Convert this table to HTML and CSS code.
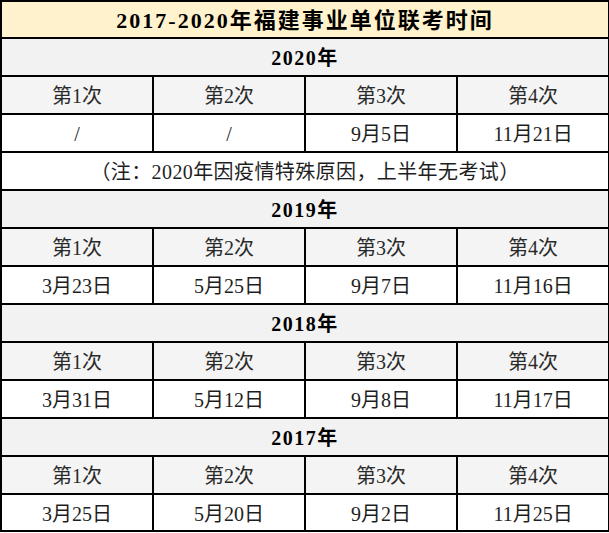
FILE: index.html
```html
<!DOCTYPE html>
<html lang="zh-CN">
<head>
<meta charset="utf-8">
<title>2017-2020年福建事业单位联考时间</title>
<link rel="stylesheet" href="styles.css">
</head>
<body>
<table class="exam">
  <colgroup><col class="c"><col class="c"><col class="c"><col class="c"></colgroup>
  <tbody>
    <tr class="title"><td colspan="4">2017-2020年福建事业单位联考时间</td></tr>

    <tr class="year"><td colspan="4">2020年</td></tr>
    <tr class="head"><td>第1次</td><td>第2次</td><td>第3次</td><td>第4次</td></tr>
    <tr class="data"><td>/</td><td>/</td><td>9月5日</td><td>11月21日</td></tr>
    <tr class="data note"><td colspan="4">（注：2020年因疫情特殊原因，上半年无考试）</td></tr>

    <tr class="year"><td colspan="4">2019年</td></tr>
    <tr class="head"><td>第1次</td><td>第2次</td><td>第3次</td><td>第4次</td></tr>
    <tr class="data"><td>3月23日</td><td>5月25日</td><td>9月7日</td><td>11月16日</td></tr>

    <tr class="year"><td colspan="4">2018年</td></tr>
    <tr class="head"><td>第1次</td><td>第2次</td><td>第3次</td><td>第4次</td></tr>
    <tr class="data"><td>3月31日</td><td>5月12日</td><td>9月8日</td><td>11月17日</td></tr>

    <tr class="year"><td colspan="4">2017年</td></tr>
    <tr class="head"><td>第1次</td><td>第2次</td><td>第3次</td><td>第4次</td></tr>
    <tr class="data last"><td>3月25日</td><td>5月20日</td><td>9月2日</td><td>11月25日</td></tr>
  </tbody>
</table>
</body>
</html>
```
FILE: styles.css
```css
html, body {
  margin: 0;
  padding: 0;
  background: #ffffff;
}

.exam {
  border-collapse: collapse;
  table-layout: fixed;
  width: 608px;
  font-family: "Liberation Serif", "Noto Sans CJK SC", serif;
  color: #1e1e1e;
}

.exam .c {
  width: 152px;
}

.exam td {
  border: 2px solid #000;
  height: 34px;
  padding: 2px 0 0;
  text-align: center;
  vertical-align: middle;
  font-size: 20px;
  line-height: 24px;
  white-space: nowrap;
}

.title td {
  height: 32px;
  padding-top: 3px;
  background: #fff2cc;
  font-size: 22px;
  font-weight: bold;
  letter-spacing: 2px;
  color: #000;
}

.year td {
  background: #f2f2f2;
  font-size: 20px;
  font-weight: bold;
  letter-spacing: 1.5px;
  color: #000;
}

.head td {
  background: #f4f4f4;
  color: #2a2a2a;
}

.data td {
  background: #ffffff;
  color: #1e1e1e;
}

.note td {
  letter-spacing: 0.4px;
}

.last td {
  height: 33px;
}
```
